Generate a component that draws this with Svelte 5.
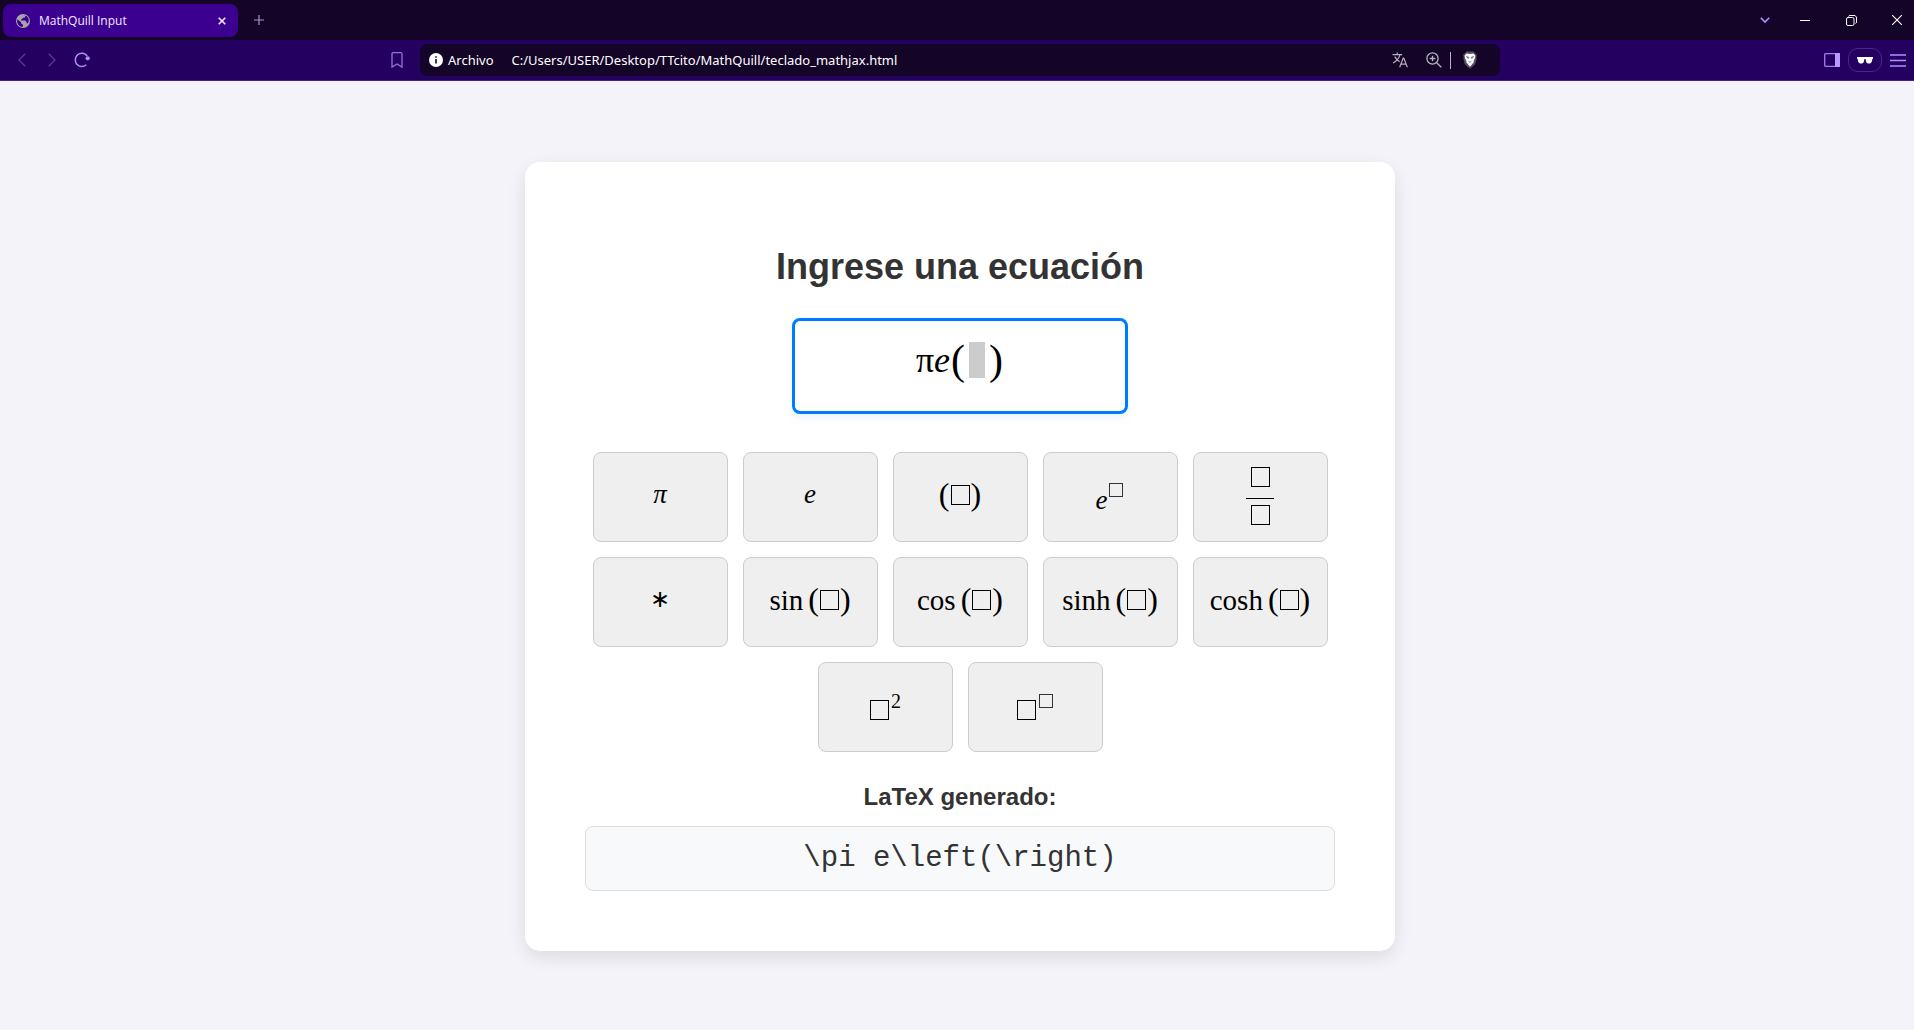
<script>
  const keys = [
    { kind: 'symbol', label: 'π', italic: true },
    { kind: 'symbol', label: 'e', italic: true },
    { kind: 'call', label: '' },
    { kind: 'power', base: 'e' },
    { kind: 'fraction' },
    { kind: 'symbol', label: '∗' },
    { kind: 'call', label: 'sin' },
    { kind: 'call', label: 'cos' },
    { kind: 'call', label: 'sinh' },
    { kind: 'call', label: 'cosh' },
    { kind: 'power', base: '', exponent: '2' },
    { kind: 'power', base: '' }
  ];
  let address = $state('C:/Users/USER/Desktop/TTcito/MathQuill/teclado_mathjax.html');
  const latex = '\\pi e\\left(\\right)';
</script>

<div class="window">
  <header class="chrome">
    <div class="titlebar">
      <div class="tab">
        <svg class="globe" viewBox="0 0 14 14" width="14" height="14" aria-hidden="true">
          <circle cx="7" cy="7" r="7" fill="#a9a3ae" />
          <path d="M1.3 5.2 5.1 8.2v1.2l1.8 1v2.3C4 13 1.3 10.500 1.100 7.400ZM7.300 1.300h1.900v1.200c0 .8-.7 1.300-1.400 1.300H6.500v1.400H5.100v1.400h4.200l1.300 1.300v1.400h1.300c1-1.600 1.100-3.600.3-5.200-.9-1.900-2.700-2.900-4.900-2.800Z" fill="#3b0090" />
        </svg>
        <span class="tab-title">MathQuill Input</span>
        <button class="icon tab-close" aria-label="Cerrar pestaña">
          <svg viewBox="0 0 8 8" width="8" height="8"><path d="m.7.7 6.600 6.600M7.300.7.7 7.300" stroke="#f1eaff" stroke-width="1.600" /></svg>
        </button>
      </div>
      <button class="icon new-tab" aria-label="Nueva pestaña">
        <svg viewBox="0 0 10 10" width="10" height="10"><path d="M5 0v10M0 5h10" stroke="#a494c8" stroke-width="1.200" /></svg>
      </button>
      <div class="window-buttons">
        <button class="icon" aria-label="Buscar pestañas">
          <svg viewBox="0 0 10 10" width="10" height="10"><path d="m.8 2.700 4.200 4.300 4.200-4.300" fill="none" stroke="#ae90ff" stroke-width="1.600" /></svg>
        </button>
        <button class="icon" aria-label="Minimizar">
          <svg viewBox="0 0 10 10" width="10" height="10"><path d="M0 5.500h10" stroke="#fff" /></svg>
        </button>
        <button class="icon" aria-label="Restaurar">
          <svg viewBox="0 0 11 11" width="11" height="11" fill="none" stroke="#fff"><rect x=".5" y="2.500" width="7.500" height="8" rx="1.500" /><path d="M2.500 1.500C2.700.8 3.200.5 4 .5h4c1.500 0 2.500 1 2.500 2.500v4c0 .8-.3 1.300-1 1.500" /></svg>
        </button>
        <button class="icon" aria-label="Cerrar">
          <svg viewBox="0 0 10 10" width="10" height="10"><path d="m0 0 10 10M10 0 0 10" stroke="#fff" stroke-width="1.100" /></svg>
        </button>
      </div>
    </div>

    <nav class="toolbar" aria-label="Navegación">
      <div class="nav-buttons">
        <button class="icon" aria-label="Atrás">
          <svg viewBox="0 0 8 14" width="8" height="14"><path d="M7.300.7 1 7l6.300 6.300" fill="none" stroke="#5d35a0" stroke-width="1.300" /></svg>
        </button>
        <button class="icon" aria-label="Adelante">
          <svg viewBox="0 0 8 14" width="8" height="14"><path d="M.7.7 7 7 .7 13.300" fill="none" stroke="#5d35a0" stroke-width="1.300" /></svg>
        </button>
        <button class="icon" aria-label="Recargar">
          <svg viewBox="0 0 16 16" width="16" height="16"><path d="M12.300 12.800A6.600 6.600 0 1 1 13.200 4" fill="none" stroke="#ae90ff" stroke-width="1.500" /><circle cx="13.700" cy="6.300" r="2.100" fill="#ae90ff" /></svg>
        </button>
        <button class="icon bookmark" aria-label="Marcador">
          <svg viewBox="0 0 12 16" width="12" height="16"><path d="M1 2c0-.8.4-1.300 1.200-1.300h7.600c.8 0 1.200.5 1.200 1.300v13.100l-5-3.200-5 3.200Z" fill="none" stroke="#9471dc" stroke-width="1.300" /></svg>
        </button>
      </div>

      <div class="address">
        <svg viewBox="0 0 14 14" width="14" height="14" aria-hidden="true"><circle cx="7" cy="7" r="7" fill="#fff" /><path d="M7 6v4.500M7 3.200v1.600" stroke="#140428" stroke-width="1.600" /></svg>
        <label for="url">Archivo</label>
        <input id="url" type="text" bind:value={address} spellcheck="false" />
        <button class="icon" aria-label="Traducir">
          <svg viewBox="0 0 16 16" width="16" height="16" fill="none" stroke="#b7b2c0" stroke-width="1.200"><path d="M.5 2.600h9.500M5.200.5v2.100M8 2.600c-.8 3.200-3.300 6.300-6.900 8.300M2.700 4.600c1.200 2.300 2.700 3.900 5 5.100M7.700 15.300l3.500-9.300h.6l3.500 9.300M9 12.100h5" /></svg>
        </button>
        <button class="icon" aria-label="Ampliar">
          <svg viewBox="0 0 16 16" width="16" height="16" fill="none" stroke="#b7b2c0" stroke-width="1.300"><circle cx="6.500" cy="6.500" r="5.600" /><path d="m10.700 10.700 4.600 4.600M6.500 3.700v5.600M3.700 6.500h5.600" /></svg>
        </button>
        <span class="divider"></span>
        <button class="icon" aria-label="Escudos">
          <svg viewBox="0 0 16 18" width="16" height="18"><path d="M4.500.6h7L13 2.200l1.800 1.300-.4 2.500.3 1.200-1.500 6L8 17.800l-5.200-4.600-1.500-6L1.600 6l-.4-2.500L3 2.200Z" fill="#55505f" /><path d="M4.500 2.500 8 3l3.500-.5 1.900 2.200-.4 2.500-1.500 3 .2 1.400-1.500 1.300-.5-.7.200 1.600L8 15.400l-1.900-1.600.2-1.600-.5.700-1.500-1.300.2-1.400-1.500-3-.4-2.500Z" fill="#fff" /><path d="m4.500 5.700 2.300.6-.4 1.100ZM11.500 5.700l-2.300.6.4 1.100ZM6.600 10.300l1.400 1 1.400-1" fill="none" stroke="#55505f" stroke-width=".8" /></svg>
        </button>
      </div>

      <div class="tools">
        <button class="icon" aria-label="Barra lateral">
          <svg viewBox="0 0 16 14" width="16" height="14"><rect x=".7" y=".7" width="14.600" height="12.600" rx=".8" fill="none" stroke="#9c7cee" stroke-width="1.300" /><path d="M11 0h5v14h-5Z" fill="#b79bff" /></svg>
        </button>
        <button class="icon private" aria-label="Ventana privada">
          <svg viewBox="0 0 16 7" width="16" height="7"><path d="M0 0h16v1.500l-.7.600c-.2 2.400-.7 4.300-2.500 4.300H11C9.400 6.400 8.900 4.500 8.600 2H7.400C7.100 4.500 6.600 6.400 5 6.400H3.200C1.400 6.400.9 4.500.7 2.100L0 1.500Z" fill="#fff" /></svg>
        </button>
        <button class="icon" aria-label="Menú">
          <svg viewBox="0 0 16 13" width="16" height="13"><path d="M0 1h16M0 6.500h16M0 12h16" stroke="#ae90ff" stroke-width="1.300" /></svg>
        </button>
      </div>
    </nav>
  </header>

  <main>
    <section class="card">
      <h1 id="prompt">Ingrese una ecuación</h1>
      <div class="field" role="textbox" tabindex="0" aria-labelledby="prompt">
        <span class="pi">π</span><i>e</i><span class="tall">(</span><span class="slot"></span><span class="tall">)</span>
      </div>

      <div class="keys">
        {#each keys as key}
          <button class="key" aria-label={key.kind + ' ' + (key.label ?? key.base ?? '')}>
            {#if key.kind === 'symbol'}
              <span class={key.italic ? 'italic' : 'operator'}>{key.label}</span>
            {:else if key.kind === 'call'}
              <span class="call">
                {#if key.label}<span class="name">{key.label}</span>{/if}
                <span class="paren">(</span><span class="box"></span><span class="paren">)</span>
              </span>
            {:else if key.kind === 'power'}
              <span class="power">{#if key.base}<span class="italic">{key.base}</span>{:else}<span class="box"></span>{/if}<span class="exponent">{#if key.exponent}{key.exponent}{:else}<span class="box small"></span>{/if}</span></span>
            {:else}
              <span class="fraction"><span class="box"></span><span class="bar"></span><span class="box"></span></span>
            {/if}
          </button>
        {/each}
      </div>

      <h2>LaTeX generado:</h2>
      <output>{latex}</output>
    </section>
  </main>
</div>

<style>
  :global(body) {
    margin: 0;
    background: #f4f3f9;
  }
  .window {
    min-height: 100vh;
    display: flex;
    flex-direction: column;
    font-family: "Liberation Sans", Arial, sans-serif;
  }
  button {
    font: inherit;
    cursor: pointer;
  }
  svg {
    display: block;
    flex: none;
  }
  .icon {
    display: flex;
    align-items: center;
    justify-content: center;
    padding: 0;
    border: 0;
    background: none;
  }

  .chrome {
    font-family: "Open Sans", "Noto Sans", sans-serif;
    color: #fff;
    border-bottom: 1px solid #4c1d87;
  }
  .titlebar {
    height: 40px;
    display: flex;
    align-items: center;
    background: #140428;
  }
  .tab {
    box-sizing: border-box;
    width: 235px;
    height: 33px;
    margin: 1px 0 0 3px;
    padding: 0 12px 0 13px;
    display: flex;
    align-items: center;
    gap: 9px;
    border-radius: 8px;
    background: #3b0090;
    font-size: 12px;
  }
  .tab-title {
    flex: 1;
    color: #f1eaff;
  }
  .new-tab {
    width: 42px;
    height: 32px;
  }
  .window-buttons {
    display: flex;
    gap: 12px;
    margin-left: auto;
  }
  .window-buttons .icon {
    width: 34px;
    height: 40px;
  }
  .window-buttons .icon:first-child {
    width: 22px;
  }

  .toolbar {
    height: 40px;
    display: grid;
    grid-template-columns: 420px 1fr 414px;
    align-items: center;
    background: #240060;
  }
  .nav-buttons {
    display: flex;
    padding: 0 8px 0 7px;
  }
  .nav-buttons .icon {
    width: 30px;
    height: 32px;
  }
  .nav-buttons .bookmark {
    margin-left: auto;
  }
  .address {
    box-sizing: border-box;
    height: 32px;
    padding: 0 22px 0 9px;
    display: flex;
    align-items: center;
    border-radius: 8px;
    background: #140428;
    font-family: "Noto Sans", "Open Sans", sans-serif;
    font-size: 13px;
  }
  .address label {
    margin: 0 18px 0 5px;
  }
  .address input {
    flex: 1;
    min-width: 0;
    padding: 0;
    border: 0;
    outline: 0;
    background: none;
    color: #fff;
    font: inherit;
  }
  .address .icon + .icon {
    margin-left: 18px;
  }
  .divider {
    width: 1px;
    height: 17px;
    margin: 0 11px 0 8px;
    background: #b7b2c0;
  }
  .tools {
    display: flex;
    align-items: center;
    justify-content: flex-end;
    gap: 8px;
    padding-right: 8px;
  }
  .private {
    box-sizing: border-box;
    width: 34px;
    height: 24px;
    border: 1px solid #4c2490;
    border-radius: 10px;
  }

  main {
    flex: 1;
    display: flex;
    align-items: center;
    justify-content: center;
    padding: 2px 0 0 6px;
  }
  .card {
    box-sizing: border-box;
    width: 100%;
    max-width: 870px;
    padding: 84px 60px 60px;
    display: flex;
    flex-direction: column;
    align-items: center;
    border-radius: 15px;
    background: #fff;
    box-shadow: 0 6px 18px rgba(0, 0, 0, 0.1);
    color: #333;
    text-align: center;
  }
  h1 {
    margin: 0 0 31px;
    font-size: 36px;
    line-height: 41px;
  }
  h2 {
    margin: 31px 0 16px;
    font-size: 24px;
    line-height: 27px;
  }
  .field {
    box-sizing: border-box;
    width: 336px;
    max-width: 100%;
    height: 96px;
    padding-bottom: 12px;
    display: flex;
    align-items: center;
    justify-content: center;
    border: 3px solid #007bff;
    border-radius: 8px;
    outline: 0;
    background: #fff;
    box-shadow: 0 3px 8px rgba(0, 123, 255, 0.1);
    color: #000;
    font: 36px/40px "Liberation Serif", "Times New Roman", serif;
  }
  .tall {
    margin: 0 1px;
    font-size: 42px;
  }
  .slot {
    width: 16px;
    height: 36px;
    margin: 0 3px;
    background: #ccc;
  }
  .keys {
    display: flex;
    flex-wrap: wrap;
    justify-content: center;
    gap: 15px;
    margin-top: 38px;
  }
  .key {
    box-sizing: border-box;
    width: 135px;
    height: 90px;
    padding: 0 0 6px;
    display: flex;
    align-items: center;
    justify-content: center;
    border: 1px solid #ccc;
    border-radius: 8px;
    background: #efefef;
    color: #000;
    font: 29px/32px "Liberation Serif", "Times New Roman", serif;
  }
  .italic {
    font-size: 27px;
    font-style: italic;
  }
  .operator {
    font-size: 24px;
  }
  .call {
    display: flex;
    align-items: baseline;
  }
  .name {
    margin-right: 5px;
  }
  .paren {
    font-size: 32px;
  }
  .box {
    box-sizing: border-box;
    display: inline-block;
    width: 19px;
    height: 20px;
    margin: 0 1px;
    border: 1px solid #000;
  }
  .small {
    width: 14px;
    height: 14px;
    border-color: #333;
  }
  .power {
    padding-top: 10px;
  }
  .exponent {
    margin-left: 1px;
    font-size: 20px;
    line-height: 16px;
    vertical-align: 12px;
  }
  .fraction {
    display: flex;
    flex-direction: column;
    align-items: center;
    gap: 6px;
    padding-top: 4px;
  }
  .bar {
    width: 28px;
    height: 1px;
    margin-top: 5px;
    background: #000;
  }
  output {
    box-sizing: border-box;
    width: 100%;
    padding: 15px;
    border: 1px solid #ddd;
    border-radius: 8px;
    background: #f8f9fb;
    font: 29px/33px "Liberation Mono", "Courier New", monospace;
  }
</style>
